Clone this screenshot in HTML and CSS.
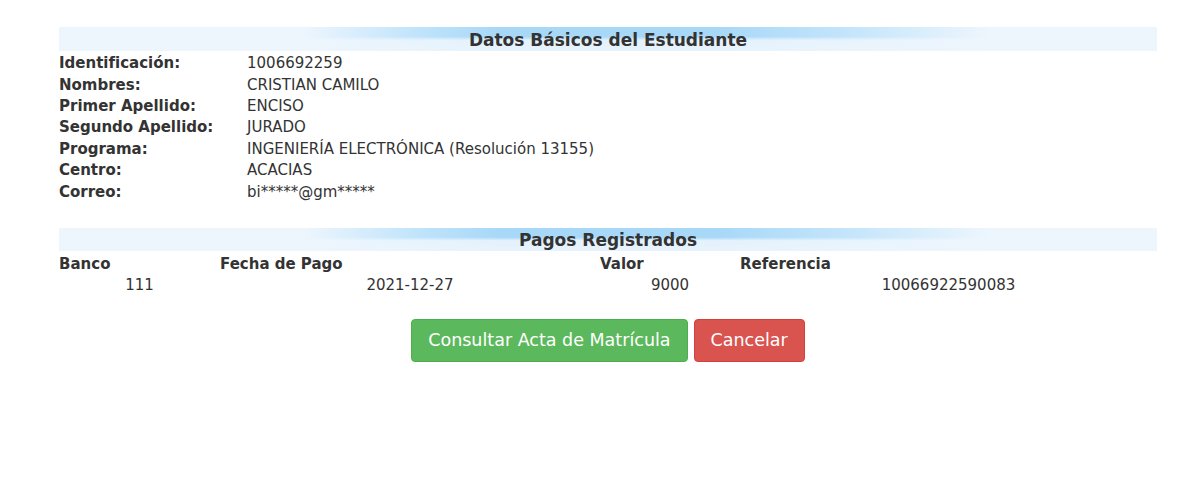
FILE: index.html
```html
<!DOCTYPE html>
<html lang="es">
<head>
<meta charset="utf-8">
<title>Datos Básicos del Estudiante</title>
<link rel="stylesheet" href="styles.css">
</head>
<body>
<div class="page">
  <div class="band">Datos Básicos del Estudiante</div>
  <table class="info">
    <tr><th>Identificación:</th><td>1006692259</td></tr>
    <tr><th>Nombres:</th><td>CRISTIAN CAMILO</td></tr>
    <tr><th>Primer Apellido:</th><td>ENCISO</td></tr>
    <tr><th>Segundo Apellido:</th><td>JURADO</td></tr>
    <tr><th>Programa:</th><td>INGENIERÍA ELECTRÓNICA (Resolución 13155)</td></tr>
    <tr><th>Centro:</th><td>ACACIAS</td></tr>
    <tr><th>Correo:</th><td>bi*****@gm*****</td></tr>
  </table>

  <div class="band band-pagos">Pagos Registrados</div>
  <table class="pagos">
    <colgroup>
      <col class="c1"><col class="c2"><col class="c3"><col class="c4">
    </colgroup>
    <tr><th>Banco</th><th>Fecha de Pago</th><th>Valor</th><th>Referencia</th></tr>
    <tr><td>111</td><td>2021-12-27</td><td>9000</td><td>10066922590083</td></tr>
  </table>

  <div class="actions">
    <button class="btn btn-success">Consultar Acta de Matrícula</button>
    <button class="btn btn-danger">Cancelar</button>
  </div>
</div>
</body>
</html>
```

FILE: styles.css
```css
html, body {
  margin: 0;
  padding: 0;
  background: #ffffff;
}
body {
  font-family: "DejaVu Sans", Verdana, sans-serif;
  font-size: 15px;
  color: #333333;
}
.page {
  margin-left: 59px;
  width: 1098px;
  padding-top: 27px;
}
.band {
  height: 24px;
  line-height: 26px;
  text-align: center;
  font-weight: bold;
  font-size: 17px;
  color: #333333;
  background:
    linear-gradient(to bottom, rgba(255,255,255,0) 0%, rgba(255,255,255,0) 40%, rgba(238,246,253,0.85) 55%, rgba(238,246,253,0.9) 100%),
    linear-gradient(to right, #eef6fd 0%, #eef6fd 22%, #bfe3fb 33%, #a8d8f8 40%, #a8d8f8 60%, #c4e5fb 72%, #eef6fd 85%, #eef6fd 100%);
}
.band-pagos {
  margin-top: 25px;
  height: 23px;
  line-height: 25px;
}
.info {
  border-collapse: collapse;
  margin-top: 2px;
}
.info th, .info td {
  padding: 0;
  height: 21.4px;
  line-height: 21px;
  font-size: 15px;
  text-align: left;
  vertical-align: middle;
}
.info th {
  width: 188px;
  font-weight: bold;
}
.pagos {
  border-collapse: collapse;
  table-layout: fixed;
  width: 1098px;
  margin-top: 3px;
}
.pagos .c1 { width: 161px; }
.pagos .c2 { width: 380px; }
.pagos .c3 { width: 140px; }
.pagos .c4 { width: 417px; }
.pagos th, .pagos td {
  padding: 0;
  height: 21px;
  line-height: 21px;
  font-size: 15px;
}
.pagos th {
  text-align: left;
  font-weight: bold;
}
.pagos td {
  text-align: center;
}
.actions {
  display: flex;
  justify-content: center;
  gap: 6px;
  margin-top: 23px;
}
.btn {
  font-family: "DejaVu Sans", Verdana, sans-serif;
  font-size: 17.5px;
  color: #ffffff;
  height: 43px;
  padding: 0 16px;
  border-radius: 4px;
  border: 1px solid transparent;
  cursor: pointer;
}
.btn-success {
  background: #5cb85c;
  border-color: #4cae4c;
}
.btn-danger {
  background: #d9534f;
  border-color: #d43f3a;
}
```
